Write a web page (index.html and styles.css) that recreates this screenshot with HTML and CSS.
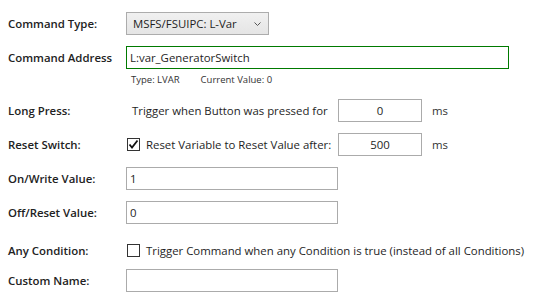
FILE: index.html
```html
<!DOCTYPE html>
<html lang="en">
<head>
<meta charset="UTF-8">
<title>Button Config</title>
<link rel="stylesheet" href="styles.css">
</head>
<body>

<div class="config">
    <div class="row first">
        <label class="caption">Command Type:</label>
        <div class="combo">
            <span>MSFS/FSUIPC: L-Var</span>
            <svg class="chevron" width="7" height="4" viewBox="0 0 7 4"><path d="M0.5 0.5 L3.5 3.5 L6.5 0.5" fill="none" stroke="#555" stroke-width="1"/></svg>
        </div>
    </div>

    <div class="row">
        <label class="caption">Command Address</label>
        <input class="field address" type="text" value="L:var_GeneratorSwitch">
    </div>
    <div class="info">
        <span>Type: LVAR</span>
        <span>Current Value: 0</span>
    </div>

    <div class="row">
        <label class="caption">Long Press:</label>
        <div class="inline">
            <span class="desc plain">Trigger when Button was pressed for</span>
            <input class="field small" type="text" value="0">
            <span class="unit">ms</span>
        </div>
    </div>

    <div class="row">
        <label class="caption">Reset Switch:</label>
        <div class="inline">
            <span class="desc"><span class="check on"><svg width="11" height="11" viewBox="0 0 11 11"><path d="M1.5 5.5 L4 8.5 L9.5 1.5" fill="none" stroke="#111" stroke-width="1.8"/></svg></span>Reset Variable to Reset Value after:</span>
            <input class="field small" type="text" value="500">
            <span class="unit">ms</span>
        </div>
    </div>

    <div class="row">
        <label class="caption">On/Write Value:</label>
        <input class="field medium" type="text" value="1">
    </div>

    <div class="row">
        <label class="caption">Off/Reset Value:</label>
        <input class="field medium" type="text" value="0">
    </div>

    <div class="row tall">
        <label class="caption">Any Condition:</label>
        <span class="desc"><span class="check"></span>Trigger Command when any Condition is true (instead of all Conditions)</span>
    </div>

    <div class="row">
        <label class="caption">Custom Name:</label>
        <input class="field medium" type="text" value="">
    </div>
</div>

</body>
</html>
```
FILE: styles.css
```css
/* Form layout */
body {
    margin: 0;
    background: #fff;
    font-family: 'Open Sans', 'Noto Sans', sans-serif;
    font-size: 11.4px;
    color: #1e1e1e;
}
.config {
    padding: 12px 0 0 8px;
}
.row {
    display: flex;
    align-items: center;
    height: 23px;
    margin-top: 11px;
}
.row.first {
    margin-top: 0;
}
.row.tall {
    height: 31px;
    padding-bottom: 3px;
}
.row.tall + .row {
    margin-top: 0;
}
.caption {
    width: 118px;
    flex: none;
    font-weight: 600;
    color: #222;
}
.combo {
    box-sizing: border-box;
    width: 143px;
    height: 23px;
    border: 1px solid #acacac;
    background: linear-gradient(#f0f0f0, #e5e5e5);
    display: flex;
    align-items: center;
    justify-content: space-between;
    padding: 0 7px 0 6px;
}
.chevron {
    margin-top: 1px;
}
.field {
    box-sizing: border-box;
    height: 23px;
    border: 1px solid #ababab;
    padding: 0 3px;
    margin: 0;
    font: inherit;
    color: #1e1e1e;
    background: #fff;
    outline: none;
}
.field.address {
    width: 383px;
    border-color: #007a00;
}
.field.medium {
    width: 212px;
}
.field.small {
    width: 84px;
    text-align: center;
}
.info {
    height: 19px;
    line-height: 21px;
    font-size: 9.5px;
    color: #333;
    padding-left: 123px;
    display: flex;
    gap: 21px;
}
.inline {
    display: flex;
    align-items: center;
}
.desc {
    width: 212px;
    display: flex;
    align-items: center;
    white-space: nowrap;
}
.desc.plain {
    padding-left: 6px;
    box-sizing: border-box;
}
.row.tall .desc {
    width: auto;
}
.check {
    box-sizing: border-box;
    width: 13px;
    height: 13px;
    border: 1px solid #333;
    background: #fff;
    margin: 0 6px 0 1px;
    display: flex;
    align-items: center;
    justify-content: center;
}
.unit {
    margin-left: 10px;
    color: #333;
}
```
